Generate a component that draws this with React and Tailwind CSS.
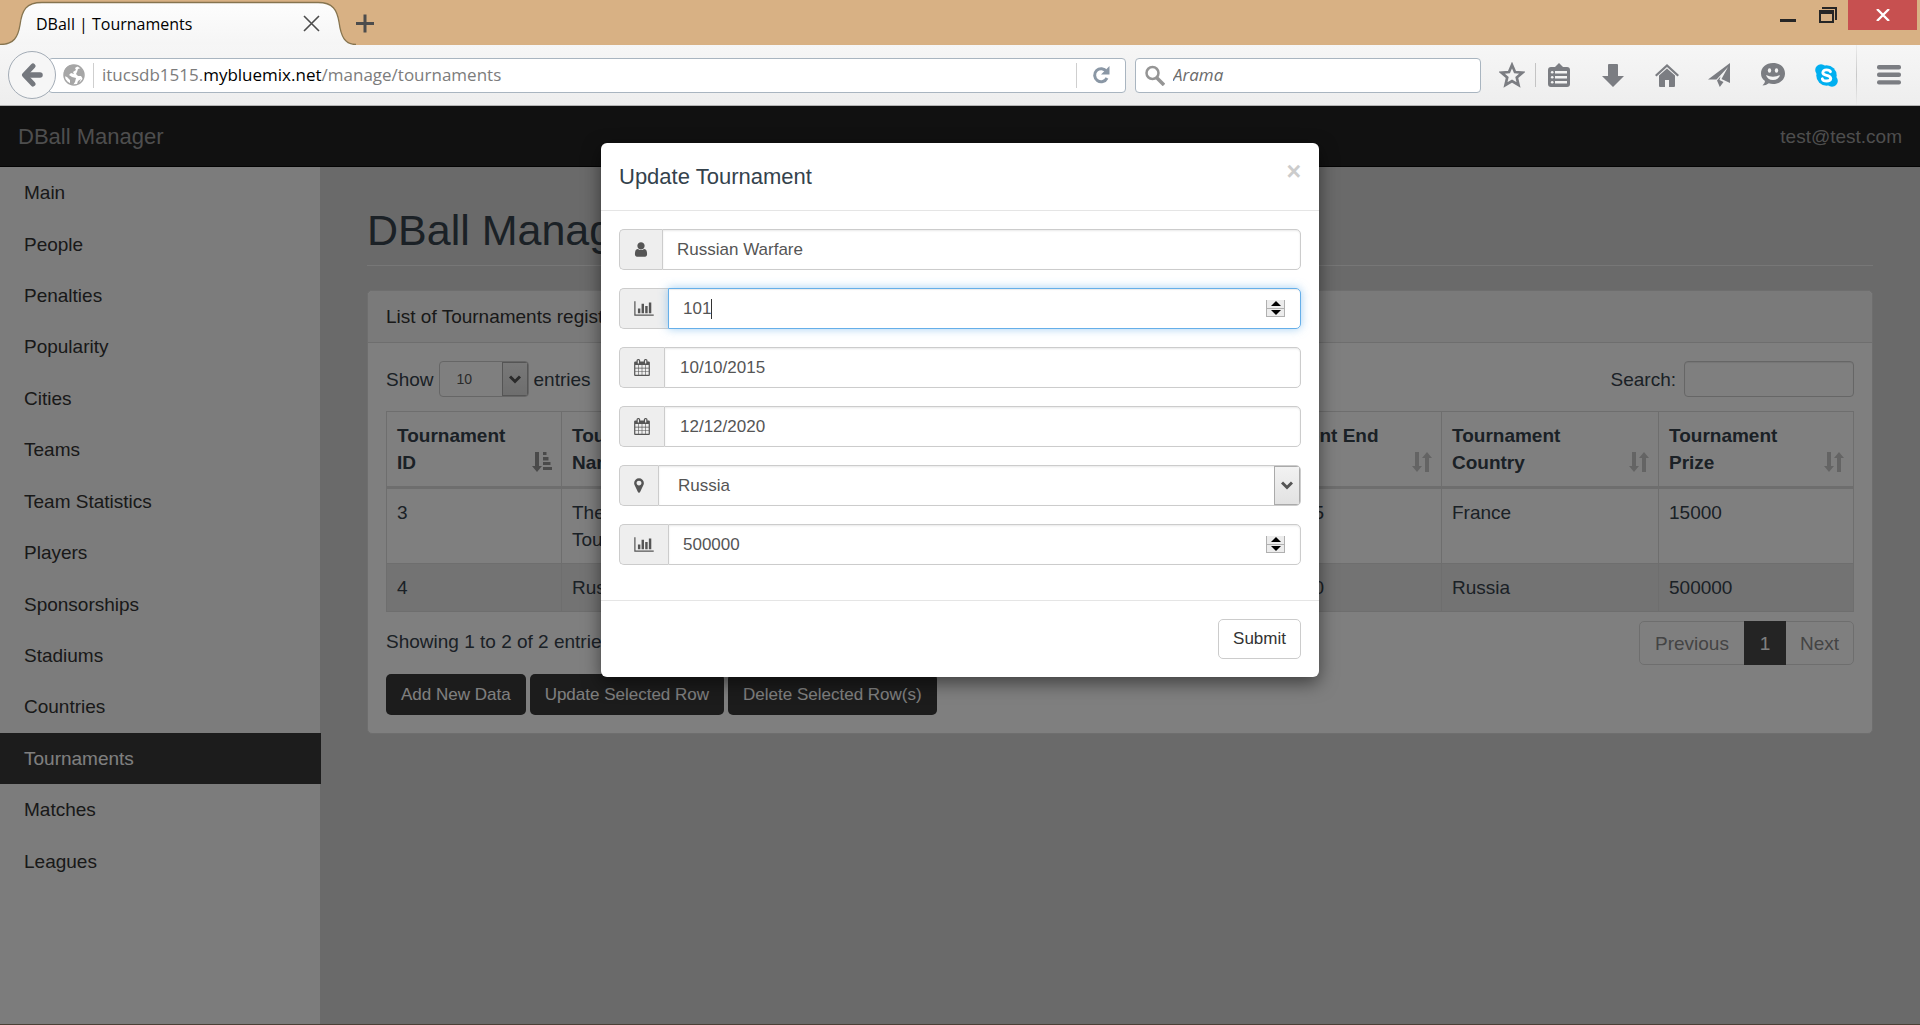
import React from "react";

const ICONS = {
  user: {
    box: "192 0 1408 1792",
    size: "w-[14px] h-[17px]",
    d: "M1536 1399q0 109-62.5 187t-150.5 78h-854q-88 0-150.5-78t-62.5-187q0-85 8.5-160.5t31.5-152 58.5-131 94-89 134.5-34.5q131 128 313 128t313-128q76 0 134.5 34.5t94 89 58.5 131 31.5 152 8.5 160.5zm-256-887q0 159-112.5 271.5t-271.5 112.5-271.5-112.5-112.5-271.5 112.5-271.5 271.5-112.5 271.5 112.5 112.5 271.5z",
  },
  chart: {
    box: "0 0 2048 1792",
    size: "w-[20px] h-[17px]",
    d: "M640 896v512h-256v-512h256zm384-512v1024h-256v-1024h256zm1024 1152v128h-2048v-1536h128v1408h1920zm-640-896v768h-256v-768h256zm384-384v1152h-256v-1152h256z",
  },
  calendar: {
    box: "64 0 1664 1792",
    size: "w-[16px] h-[17px]",
    d: "M192 1664h288v-288h-288v288zm352 0h320v-288h-320v288zm-352-352h288v-320h-288v320zm352 0h320v-320h-320v320zm-352-384h288v-288h-288v288zm736 736h320v-288h-320v288zm-384-736h320v-288h-320v288zm768 736h288v-288h-288v288zm-384-352h320v-320h-320v320zm-352-864v-288q0-13-9.5-22.5t-22.5-9.5h-64q-13 0-22.5 9.5t-9.5 22.5v288q0 13 9.5 22.5t22.5 9.5h64q13 0 22.5-9.5t9.5-22.5zm736 864h288v-320h-288v320zm-384-384h320v-288h-320v288zm384 0h288v-288h-288v288zm32-480v-288q0-13-9.5-22.5t-22.5-9.5h-64q-13 0-22.5 9.5t-9.5 22.5v288q0 13 9.5 22.5t22.5 9.5h64q13 0 22.5-9.5t9.5-22.5zm384-64v1280q0 52-38 90t-90 38h-1408q-52 0-90-38t-38-90v-1280q0-52 38-90t90-38h128v-96q0-66 47-113t113-47h64q66 0 113 47t47 113v96h384v-96q0-66 47-113t113-47h64q66 0 113 47t47 113v96h128q52 0 90 38t38 90z",
  },
  marker: {
    box: "384 0 1024 1792",
    size: "w-[10px] h-[17px]",
    d: "M1152 640q0-106-75-181t-181-75-181 75-75 181 75 181 181 75 181-75 75-181zm256 0q0 109-33 179l-364 774q-16 33-47.5 52t-67.5 19-67.5-19-46.5-52l-365-774q-33-70-33-179 0-212 150-362t362-150 362 150 150 362z",
  },
};

function TitleBar() {
  return (
    <div className="flex h-[45px] items-start bg-[#d8b184]">
      <div className="relative flex h-[45px] w-[356px] items-center">
        <svg className="absolute inset-0 h-full w-full" viewBox="0 0 356 45" preserveAspectRatio="none" aria-hidden="true">
          <defs>
            <linearGradient id="tabFill" x1="0" y1="0" x2="0" y2="1">
              <stop offset="0" stopColor="#fdfdfd" />
              <stop offset="1" stopColor="#f5f5f5" />
            </linearGradient>
          </defs>
          <path
            d="M0 44.5C14 44.5 18 37 20 25C22 10 26 2.500 42 2.500H318C333 2.500 337 10 339 22C341 37 345 44.500 356 44.500V46H0Z"
            fill="url(#tabFill)"
          />
          <path
            d="M0 44.5C14 44.5 18 37 20 25C22 10 26 2.500 42 2.500H318C333 2.500 337 10 339 22C341 37 345 44.500 356 44.500"
            fill="none"
            stroke="#86744f"
            strokeWidth="1.300"
          />
        </svg>
        <div className="relative flex flex-1 items-center justify-between pt-[2px] pl-9 pr-9">
          <span className="font-['Open_Sans',sans-serif] text-base leading-6 text-black">DBall | Tournaments</span>
          <button type="button" aria-label="Close tab" className="text-[#4c4c4c]">
            <svg width="17" height="17" viewBox="0 0 17 17" fill="none" stroke="currentColor" strokeWidth="1.600">
              <path d="M1 1L16 16M16 1L1 16" />
            </svg>
          </button>
        </div>
      </div>
      <button type="button" aria-label="New tab" className="mt-[14px] text-[#4c4c4c]">
        <svg width="18" height="19" viewBox="0 0 18 19" fill="none" stroke="currentColor" strokeWidth="3">
          <path d="M9 .5V18.5M0 9.500H18" />
        </svg>
      </button>
      <div className="ml-auto flex items-start pr-[3px]">
        <button type="button" aria-label="Minimize" className="pt-[7px] pr-[23px]">
          <svg width="16" height="16" viewBox="0 0 16 16" fill="#262626">
            <path d="M0 12H16V15H0Z" />
          </svg>
        </button>
        <button type="button" aria-label="Restore" className="pt-[7px] pr-[11px]">
          <svg width="18" height="16" viewBox="0 0 18 16" fill="#262626">
            <path d="M3 0H18V13H16V2H3Z" />
            <path fillRule="evenodd" d="M0 3H15V16H0ZM2 7V14H13V7Z" />
          </svg>
        </button>
        <button type="button" aria-label="Close window" className="flex h-[30px] w-[69px] items-center justify-center bg-[#c75050]">
          <svg width="14" height="12" viewBox="0 0 14 12" fill="none" stroke="#fff" strokeWidth="2.300">
            <path d="M1 0L13 12M13 0L1 12" />
          </svg>
        </button>
      </div>
    </div>
  );
}

function ToolButton({ label, children }) {
  return (
    <button type="button" aria-label={label} className="flex h-[34px] w-[54px] items-center justify-center text-[#7b7d82]">
      {children}
    </button>
  );
}

function Toolbar() {
  return (
    <div className="flex h-[61px] items-center border-b border-[#b4b4b4] bg-linear-to-b from-[#f6f6f6] to-[#eeeeee] pl-2">
      <button
        type="button"
        aria-label="Back"
        className="z-10 flex size-12 shrink-0 items-center justify-center rounded-full border border-[#a3acb6] bg-[#f6f6f6]"
      >
        <svg width="22" height="24" viewBox="0 0 22 24" fill="none" stroke="#75787e" strokeLinejoin="round" strokeLinecap="round">
          <path d="M12 3L3.500 12L12 21" strokeWidth="5" />
          <path d="M5 12H19" strokeWidth="5.500" />
        </svg>
      </button>
      <div className="-ml-2 flex h-[35px] flex-1 items-center rounded-sm border border-[#a9b5c0] bg-white pl-[14px]">
        <svg width="22" height="22" viewBox="0 0 22 22" aria-hidden="true">
          <circle cx="11" cy="11" r="10" fill="#fff" stroke="#a6a6a6" strokeWidth="1.500" />
          <path d="M2 5Q6 0 12 1L15 2L12 4L13 6L10 8L11 10L8 9L6 11L9 13L13 14L12 18L10 21L7 20L7 16L4 13L1 12Q0 8 2 5Z" fill="#a6a6a6" />
          <path d="M15 5L18 4Q22 9 20 15L18 12L15 12L13 10L14 8ZM15 17L18 15L16 19L14 20Z" fill="#a6a6a6" />
        </svg>
        <div className="ml-2 flex h-[25px] flex-1 items-center border-l border-[#cfcfcf] pl-2 font-['Open_Sans',sans-serif] text-[17px] leading-6 text-[#7c7c7c]">
          <span>
            itucsdb1515.<span className="text-black">mybluemix.net</span>/manage/tournaments
          </span>
        </div>
        <button type="button" aria-label="Reload" className="flex h-[25px] w-[49px] items-center justify-center border-l border-[#cfcfcf] text-[#8a97a5]">
          <svg width="18" height="18" viewBox="0 0 18 18">
            <path d="M14.500 5.500A6.500 6.500 0 1 0 15 12" fill="none" stroke="currentColor" strokeWidth="3" />
            <path d="M17.500 0V8.500H9Z" fill="currentColor" />
          </svg>
        </button>
      </div>
      <label className="ml-[9px] flex h-[35px] w-[346px] items-center rounded-sm border border-[#a9b5c0] bg-white pl-[9px]">
        <svg width="20" height="21" viewBox="0 0 20 21" fill="none" stroke="#959595" aria-hidden="true">
          <circle cx="7.500" cy="8" r="6" strokeWidth="2.500" />
          <path d="M11.500 12.500L19 20" strokeWidth="3.500" />
        </svg>
        <input
          type="text"
          aria-label="Arama"
          placeholder="Arama"
          className="ml-2 min-w-0 flex-1 bg-transparent font-['Open_Sans',sans-serif] text-[17px] italic leading-6 outline-none placeholder:text-[#6b6b6b]"
        />
      </label>
      <div className="flex items-center">
        <button type="button" aria-label="Bookmark" className="ml-[6px] flex w-[49px] items-center justify-center text-[#7b7d82]">
          <svg width="26" height="26" viewBox="0 0 26 26" fill="none" stroke="currentColor" strokeWidth="2.700">
            <path d="M13 3L16 10L23.500 10.600L17.800 15.500L19.500 23L13 19L6.500 23L8.200 15.500L2.500 10.600L10 10Z" />
          </svg>
        </button>
        <span className="-ml-px h-6 w-px bg-[#c4c4c4]" />
        <button type="button" aria-label="Bookmarks list" className="mr-1 flex w-[46px] items-center justify-center text-[#7b7d82]">
          <svg width="22" height="24" viewBox="0 0 22 24" fill="currentColor">
            <path d="M3 4H7L11 0L15 4H19Q22 4 22 7V21Q22 24 19 24H3Q0 24 0 21V7Q0 4 3 4Z" />
            <g fill="#f3f3f3">
              <path d="M7 8H19V10.500H7ZM7 13H19V15.500H7ZM7 18H19V20.500H7Z" />
              <circle cx="4.200" cy="9.300" r="1.300" />
              <circle cx="4.200" cy="14.300" r="1.300" />
              <circle cx="4.200" cy="19.300" r="1.300" />
            </g>
          </svg>
        </button>
        <ToolButton label="Downloads">
          <svg width="22" height="23" viewBox="0 0 22 23" fill="currentColor">
            <path d="M7 0H15Q16 0 16 1V12H22L11 23L0 12H6V1Q6 0 7 0Z" />
          </svg>
        </ToolButton>
        <ToolButton label="Home">
          <svg width="24" height="23" viewBox="0 0 24 23" fill="currentColor">
            <path d="M12 0L24 11L22.500 12.500L12 3L1.500 12.500L0 11Z" />
            <path d="M12 4.500L20 11.500V22Q20 23 19 23H14V16H10V23H5Q4 23 4 22V11.500Z" />
          </svg>
        </ToolButton>
        <button type="button" aria-label="Share" className="flex h-[34px] w-[50px] items-center justify-center text-[#7b7d82]">
          <svg width="22" height="24" viewBox="0 0 22 24" fill="currentColor">
            <path d="M22 0V20L13.500 16L20 4L8.500 16.500L0 16.500Z" />
            <path d="M9 17.500L12.500 13.500L11.500 17L15.500 19L11.800 24Z" />
          </svg>
        </button>
        <button type="button" aria-label="Chat" className="flex h-[34px] w-[57px] items-center justify-center text-[#7b7d82]">
          <svg width="24" height="24" viewBox="0 0 24 24">
            <path d="M12 0C19 0 24 4.500 24 10.500S19 21 12 21C10.500 21 9 20.800 7.800 20.300Q5 22.500 1.500 22.500Q4 20.500 4 18Q0 15 0 10.500C0 4.500 5 0 12 0Z" fill="currentColor" />
            <path d="M5 12Q12 15.500 19 12Q17.500 17 12 17T5 12Z" fill="#f3f3f3" />
            <ellipse cx="8.500" cy="7.500" rx="1.700" ry="2.200" fill="#f3f3f3" />
            <ellipse cx="15.500" cy="7.500" rx="1.700" ry="2.200" fill="#f3f3f3" />
          </svg>
        </button>
        <button type="button" aria-label="Skype" className="flex h-[34px] w-[50px] items-center justify-center">
          <svg width="23" height="23" viewBox="0 0 23 23">
            <circle cx="11.500" cy="11.500" r="10.200" fill="#00aff0" />
            <circle cx="6" cy="6" r="5.800" fill="#00aff0" />
            <circle cx="17" cy="17" r="5.800" fill="#00aff0" />
            <path d="M15.500 7.800Q14.800 5.900 11.500 5.900T7.800 8.500Q7.800 10.600 11.600 11.300T15.800 14.500Q15.500 17 11.700 17T7.300 14.800" fill="none" stroke="#fff" strokeWidth="2.800" strokeLinecap="round" />
          </svg>
        </button>
        <span className="ml-[5px] h-[60px] w-px bg-linear-to-b from-[#ececec] via-[#c8c8c8] to-[#ececec]" />
        <button type="button" aria-label="Menu" className="flex w-[63px] items-center justify-center text-[#7b7d82]">
          <svg width="24" height="20" viewBox="0 0 24 20" fill="currentColor">
            <rect width="24" height="4.400" rx="2" />
            <rect y="7.600" width="24" height="4.400" rx="2" />
            <rect y="15.200" width="24" height="4.400" rx="2" />
          </svg>
        </button>
      </div>
    </div>
  );
}

const NAV = [
  "Main",
  "People",
  "Penalties",
  "Popularity",
  "Cities",
  "Teams",
  "Team Statistics",
  "Players",
  "Sponsorships",
  "Stadiums",
  "Countries",
  "Tournaments",
  "Matches",
  "Leagues",
];

function Sidebar() {
  return (
    <nav className="w-[320px] shrink-0 bg-[#f8f8f8]">
      <ul className="flex h-[720px] flex-col">
        {NAV.map((item) => (
          <li key={item} className="flex flex-1">
            <a
              href="#"
              className={
                item === "Tournaments"
                  ? "-mr-px flex flex-1 items-center bg-[#383838] pl-6 text-white"
                  : "flex flex-1 items-center pl-6 text-[#333333]"
              }
            >
              {item}
            </a>
          </li>
        ))}
      </ul>
    </nav>
  );
}

function SortIcon({ active }) {
  return (
    <svg
      width="20"
      height="20"
      viewBox="0 0 20 20"
      className={active ? "shrink-0 text-[#959595]" : "shrink-0 text-[#c9c9c9]"}
      fill="currentColor"
      aria-hidden="true"
    >
      <path d="M3 0H7V14H10L5 20L0 14H3Z" />
      {active ? (
        <path d="M11 0H14.500V3H11ZM11 5H16.500V8.500H11ZM11 10H18.500V13H11ZM11 15H20V18H11Z" />
      ) : (
        <path d="M13 20H17V6H20L15 0L10 6H13Z" />
      )}
    </svg>
  );
}

const COLUMNS = [
  ["Tournament", "ID", "w-[175px]"],
  ["Tournament", "Name", "w-[15%]"],
  ["Tournament", "Matches", "w-[15%]"],
  ["Tournament Start", "Date", "w-[218px]"],
  ["Tournament End", "Date", "w-[223px]"],
  ["Tournament", "Country", "w-[217px]"],
  ["Tournament", "Prize", "w-[195px]"],
];

const ROWS = [
  ["3", "The French Tournament", "20", "05/05/2015", "10/10/2015", "France", "15000"],
  ["4", "Russian Warfare", "101", "10/10/2015", "12/12/2020", "Russia", "500000"],
];

function DataTable() {
  return (
    <table className="mt-[14px] w-full table-fixed border-collapse border border-[#dddddd]">
      <thead>
        <tr>
          {COLUMNS.map(([first, second, width], i) => (
            <th key={i} scope="col" className={`${width} border border-b-3 border-[#dddddd] px-[10px] pt-[10px] pb-[10px] text-left font-bold`}>
              <div className="flex items-end justify-between">
                <span>
                  {first}
                  <br />
                  {second}
                </span>
                <span className="-mr-px pb-1">
                  <SortIcon active={i === 0} />
                </span>
              </div>
            </th>
          ))}
        </tr>
      </thead>
      <tbody>
        {ROWS.map((row) => (
          <tr key={row[0]} className="even:bg-[#e6e6e6]">
            {row.map((cell, i) => (
              <td key={i} className="border border-[#dddddd] px-[10px] py-[10px] align-top">
                {cell}
              </td>
            ))}
          </tr>
        ))}
      </tbody>
    </table>
  );
}

function Chevron() {
  return (
    <svg width="12" height="9" viewBox="0 0 12 9" fill="none" stroke="#555" strokeWidth="3" aria-hidden="true">
      <path d="M1 1.500L6 6.500L11 1.500" />
    </svg>
  );
}

function Panel() {
  return (
    <section className="mt-6 rounded-[5px] border border-[#dddddd] bg-white">
      <div className="rounded-t-[5px] border-b border-[#dddddd] bg-[#f5f5f5] px-[18px] py-3 text-[#333333]">
        List of Tournaments registered in the system
      </div>
      <div className="p-[18px]">
        <div className="flex items-center justify-between">
          <label className="flex items-center gap-[5px]">
            Show
            <span className="flex h-9 w-[90px] overflow-hidden rounded-[4px] border border-[#cccccc] text-[14px] text-[#555555]">
              <select defaultValue="10" aria-label="Entries shown" className="min-w-0 flex-1 appearance-none pl-[17px]">
                <option>10</option>
              </select>
              <span className="flex w-[26px] items-center justify-center border border-[#aaaaaa] bg-linear-to-b from-[#f2f2f2] to-[#dcdcdc]">
                <Chevron />
              </span>
            </span>
            entries
          </label>
          <label className="flex items-center gap-2">
            Search:
            <input type="search" className="h-9 w-[170px] rounded-[4px] border border-[#cccccc] bg-white px-3 shadow-[inset_0_1px_1px_rgba(0,0,0,0.08)]" />
          </label>
        </div>
        <DataTable />
        <div className="mt-[9px] flex items-start justify-between">
          <p className="pt-[7px]">Showing 1 to 2 of 2 entries</p>
          <div className="flex h-11 items-stretch rounded-[5px] border border-[#dddddd] text-[#888888]">
            <button type="button" className="px-[15px]">Previous</button>
            <button type="button" className="-my-px w-[42px] bg-[#484848] text-white">1</button>
            <button type="button" className="px-[14px]">Next</button>
          </div>
        </div>
        <div className="mt-[9px] flex gap-1 text-[17px] leading-6 text-white">
          {["Add New Data", "Update Selected Row", "Delete Selected Row(s)"].map((label) => (
            <button key={label} type="button" className="h-[41px] rounded-[5px] bg-[#383838] px-[15px]">
              {label}
            </button>
          ))}
        </div>
      </div>
    </section>
  );
}

function Spinner() {
  return (
    <span className="mr-[15px] flex h-[17px] w-[19px] flex-col border border-t-0 border-[#b0b0b0] bg-[#ececec]">
      <button type="button" tabIndex={-1} aria-label="Increase" className="flex flex-1 items-center justify-center border-b border-[#b0b0b0]">
        <svg width="10" height="5" viewBox="0 0 10 5"><path d="M5 0L10 5H0Z" /></svg>
      </button>
      <button type="button" tabIndex={-1} aria-label="Decrease" className="flex flex-1 items-center justify-center">
        <svg width="10" height="5" viewBox="0 0 10 5"><path d="M5 5L10 0H0Z" /></svg>
      </button>
    </span>
  );
}

function Field({ icon, label, focused, children }) {
  const glyph = ICONS[icon];
  return (
    <label className="flex h-[41px]">
      <span className="sr-only">{label}</span>
      <span className="flex items-center rounded-l-[5px] border border-r-0 border-[#cccccc] bg-[#eeeeee] px-[14px]">
        <svg viewBox={glyph.box} className={glyph.size} fill="#555555" aria-hidden="true">
          <path d={glyph.d} />
        </svg>
      </span>
      <span
        className={
          focused
            ? "flex min-w-0 flex-1 items-center overflow-hidden rounded-r-[5px] border border-[#66afe9] shadow-[inset_0_1px_1px_rgba(0,0,0,0.08),0_0_10px_rgba(102,175,233,0.6)]"
            : "flex min-w-0 flex-1 items-center overflow-hidden rounded-r-[5px] border border-[#cccccc] shadow-[inset_0_1px_2px_rgba(0,0,0,0.09)]"
        }
      >
        {children}
      </span>
    </label>
  );
}

function UpdateDialog() {
  return (
    <form
      role="dialog"
      aria-labelledby="dialog-title"
      className="w-[718px] self-start rounded-[6px] bg-white text-[17px] leading-6 text-[#555555] shadow-[0_6px_18px_rgba(0,0,0,0.5)]"
    >
      <header className="flex items-start justify-between border-b border-[#e5e5e5] px-[18px] pt-[18px] pb-[17px]">
        <h2 id="dialog-title" className="text-[22px] leading-8 text-[#34424c]">Update Tournament</h2>
        <button type="button" aria-label="Close" className="text-[25px] font-bold leading-5 text-[#cccccc]">×</button>
      </header>
      <div className="flex flex-col gap-[18px] px-[18px] pt-[18px] pb-[35px]">
        <Field icon="user" label="Tournament name">
          <input type="text" defaultValue="Russian Warfare" className="min-w-0 flex-1 px-[14px] outline-none" />
        </Field>
        <Field icon="chart" label="Number of matches" focused>
          <input type="text" inputMode="numeric" defaultValue="101" className="pl-[14px] outline-none [field-sizing:content]" />
          <span className="h-5 w-px bg-[#333333]" />
          <span className="flex-1" />
          <Spinner />
        </Field>
        <Field icon="calendar" label="Start date">
          <input type="text" defaultValue="10/10/2015" className="min-w-0 flex-1 px-[15px] outline-none" />
        </Field>
        <Field icon="calendar" label="End date">
          <input type="text" defaultValue="12/12/2020" className="min-w-0 flex-1 px-[15px] outline-none" />
        </Field>
        <Field icon="marker" label="Country">
          <select defaultValue="Russia" className="h-full min-w-0 flex-1 appearance-none pl-[19px] outline-none">
            <option>Russia</option>
          </select>
          <span className="flex h-full w-[26px] items-center justify-center border border-[#aaaaaa] bg-linear-to-b from-[#f2f2f2] to-[#e2e2e2]">
            <Chevron />
          </span>
        </Field>
        <Field icon="chart" label="Prize">
          <input type="text" inputMode="numeric" defaultValue="500000" className="min-w-0 flex-1 pl-[14px] outline-none" />
          <Spinner />
        </Field>
      </div>
      <footer className="flex justify-end border-t border-[#e5e5e5] p-[18px]">
        <button type="button" className="h-10 rounded-[5px] border border-[#cccccc] bg-white px-[14px] text-[#333333]">
          Submit
        </button>
      </footer>
    </form>
  );
}

export default function App() {
  return (
    <div className="flex min-h-screen flex-col font-['Liberation_Sans',Arial,sans-serif] text-[19px] leading-[27px]">
      <TitleBar />
      <Toolbar />
      <div className="relative flex flex-1 flex-col bg-[#d4d4d4]">
        <header className="flex h-[61px] items-center justify-between border-b border-[#080808] bg-[#222222] px-[18px] text-[#9d9d9d]">
          <a href="#" className="text-[22px]">DBall Manager</a>
          <a href="#">test@test.com</a>
        </header>
        <div className="flex flex-1">
          <Sidebar />
          <main className="min-w-0 flex-1 px-[47px] pt-[39px] text-[#36424c]">
            <h1 className="border-b border-[#eeeeee] pb-[11px] text-[43px] leading-[48px]">DBall Manager</h1>
            <Panel />
          </main>
        </div>
        <div className="absolute inset-0 flex justify-center bg-black/50 pt-[37px]">
          <UpdateDialog />
        </div>
      </div>
      <div className="h-px bg-[#4a4036]" />
    </div>
  );
}
